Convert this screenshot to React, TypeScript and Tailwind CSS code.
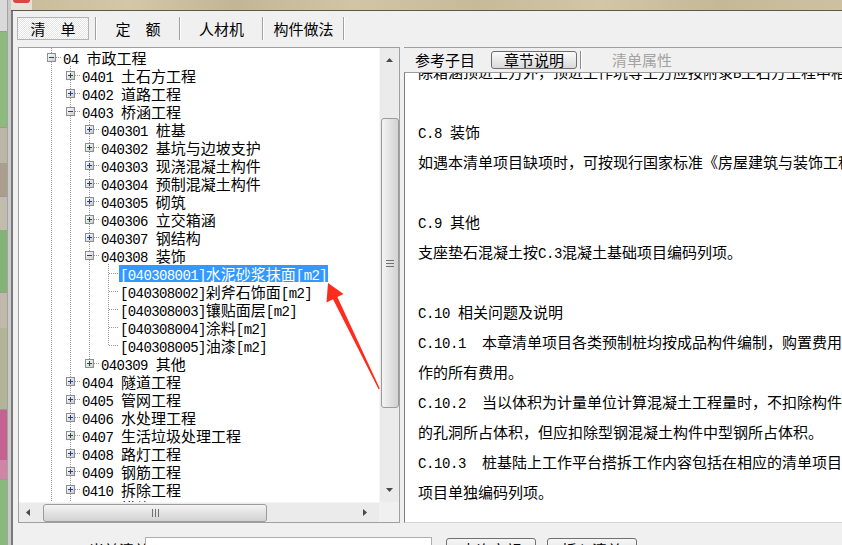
import React from "react";

const LAT = "font-['Liberation_Mono',monospace] text-[14px] tracking-[-0.6px]";
const LAT2 = "font-['Liberation_Mono',monospace] text-[14px] tracking-[-0.4px]";
const CJK = "font-['Noto_Sans_CJK_SC',sans-serif] text-[15px]";

function Mixed({ text, lat, cjk }: { text: string; lat: string; cjk: string }) {
  const parts = text.match(/[\x00-\x7f]+|[^\x00-\x7f]+/g) || [];
  return (
    <>
      {parts.map((p, i) =>
        /^[\x00-\x7f]/.test(p) ? (
          <span key={i} className={lat}>
            {p}
          </span>
        ) : (
          <span key={i} className={cjk}>
            {p}
          </span>
        )
      )}
    </>
  );
}

type Box = "plus" | "minus" | undefined;

function Cell({ anc, last, box, id }: { anc?: boolean; last?: boolean; box?: Box; id: string }) {
  const dot = "#9a9a9a";
  return (
    <svg width="19" height="18" className="block shrink-0">
      {anc ? (
        <line x1="8.5" y1="0" x2="8.5" y2="18" stroke={dot} strokeDasharray="1 1" />
      ) : (
        <>
          <defs>
            <linearGradient id={id} x1="0" y1="0" x2="1" y2="1">
              <stop offset="0" stopColor="#ffffff" />
              <stop offset="1" stopColor="#c9c9c9" />
            </linearGradient>
          </defs>
          <line x1="8.5" y1="0" x2="8.5" y2={last ? 9 : 18} stroke={dot} strokeDasharray="1 1" />
          <line x1="9" y1="9.5" x2="19" y2="9.5" stroke={dot} strokeDasharray="1 1" />
          {box && (
            <>
              <rect x="4.5" y="5.5" width="8" height="8" fill={`url(#${id})`} stroke="#8e8e8e" />
              <line x1="6" y1="9.5" x2="11" y2="9.5" stroke="#23408e" />
              {box === "plus" && <line x1="8.5" y1="7" x2="8.5" y2="12" stroke="#23408e" />}
            </>
          )}
        </>
      )}
    </svg>
  );
}

type Node = { d: number; t: string; box?: Box; last?: boolean; sel?: boolean };

const rows: Node[] = [
  { d: 0, t: "04 市政工程", box: "minus" },
  { d: 1, t: "0401 土石方工程", box: "plus" },
  { d: 1, t: "0402 道路工程", box: "plus" },
  { d: 1, t: "0403 桥涵工程", box: "minus" },
  { d: 2, t: "040301 桩基", box: "plus" },
  { d: 2, t: "040302 基坑与边坡支护", box: "plus" },
  { d: 2, t: "040303 现浇混凝土构件", box: "plus" },
  { d: 2, t: "040304 预制混凝土构件", box: "plus" },
  { d: 2, t: "040305 砌筑", box: "plus" },
  { d: 2, t: "040306 立交箱涵", box: "plus" },
  { d: 2, t: "040307 钢结构", box: "plus" },
  { d: 2, t: "040308 装饰", box: "minus" },
  { d: 3, t: "[040308001]水泥砂浆抹面[m2]", sel: true },
  { d: 3, t: "[040308002]剁斧石饰面[m2]" },
  { d: 3, t: "[040308003]镶贴面层[m2]" },
  { d: 3, t: "[040308004]涂料[m2]" },
  { d: 3, t: "[040308005]油漆[m2]", last: true },
  { d: 2, t: "040309 其他", box: "plus", last: true },
  { d: 1, t: "0404 隧道工程", box: "plus" },
  { d: 1, t: "0405 管网工程", box: "plus" },
  { d: 1, t: "0406 水处理工程", box: "plus" },
  { d: 1, t: "0407 生活垃圾处理工程", box: "plus" },
  { d: 1, t: "0408 路灯工程", box: "plus" },
  { d: 1, t: "0409 钢筋工程", box: "plus" },
  { d: 1, t: "0410 拆除工程", box: "plus" },
  { d: 1, t: "0411 措施项目", box: "plus" },
];

function TreeRow({ n, i }: { n: Node; i: number }) {
  return (
    <div className="flex h-[18px] items-center whitespace-nowrap">
      {Array.from({ length: n.d }).map((_, k) => (
        <Cell key={k} anc id={`a${i}-${k}`} />
      ))}
      <Cell last={n.last} box={n.box} id={`g${i}`} />
      <span
        className={
          n.sel
            ? "h-[17px] leading-[17px] px-[1px] bg-[#3399ff] text-white"
            : "h-[17px] leading-[17px] px-[1px] text-black"
        }
      >
        <Mixed text={n.t} lat={LAT} cjk={CJK} />
      </span>
    </div>
  );
}

function TriUp() {
  return (
    <svg width="7" height="4" className="block">
      <polygon points="3.5,0 7,4 0,4" fill="#4a4a4a" />
    </svg>
  );
}
function TriDown() {
  return (
    <svg width="7" height="4" className="block">
      <polygon points="0,0 7,0 3.5,4" fill="#4a4a4a" />
    </svg>
  );
}
function TriLeft() {
  return (
    <svg width="4" height="7" className="block">
      <polygon points="4,0 4,7 0,3.5" fill="#4a4a4a" />
    </svg>
  );
}
function TriRight() {
  return (
    <svg width="4" height="7" className="block">
      <polygon points="0,0 4,3.5 0,7" fill="#4a4a4a" />
    </svg>
  );
}

function VScroll() {
  return (
    <div className="w-[20px] h-full bg-[#ebebeb] border-l border-[#f6f6f6] flex flex-col items-center">
      <div className="h-[24px] w-full flex items-center justify-center">
        <TriUp />
      </div>
      <div className="h-[46px]" />
      <div className="h-[290px] w-[18px] rounded-[3px] border border-[#9b9b9b] bg-[linear-gradient(to_right,#f4f4f4,#e2e2e2_50%,#d2d2d2)] flex flex-col items-center justify-center gap-[2px]">
        <div className="w-[8px] h-px bg-[#707070]" />
        <div className="w-[8px] h-px bg-[#707070]" />
        <div className="w-[8px] h-px bg-[#707070]" />
      </div>
      <div className="flex-1" />
      <div className="h-[20px] w-full flex justify-center pt-[6px]">
        <TriDown />
      </div>
    </div>
  );
}

function HScroll() {
  return (
    <div className="flex-1 h-full bg-[#ebebeb] border-t border-[#f6f6f6] flex items-center">
      <div className="w-[17px] h-full flex items-center justify-center">
        <TriLeft />
      </div>
      <div className="w-[7px]" />
      <div className="w-[224px] h-[18px] rounded-[3px] border border-[#9b9b9b] bg-[linear-gradient(to_bottom,#f4f4f4,#e2e2e2_50%,#d2d2d2)] flex items-center justify-center gap-[2px]">
        <div className="h-[8px] w-px bg-[#707070]" />
        <div className="h-[8px] w-px bg-[#707070]" />
        <div className="h-[8px] w-px bg-[#707070]" />
      </div>
      <div className="flex-1" />
      <div className="w-[20px] h-full flex items-center justify-start pl-[4px]">
        <TriRight />
      </div>
    </div>
  );
}

function TreePanel() {
  return (
    <div className="ml-[5px] w-[382px] h-[476px] border border-[#a0a0a0] bg-white flex flex-col shrink-0">
      <div className="flex h-[454px]">
        <div className="flex-1 overflow-hidden pl-[24px]">
          {rows.map((n, i) => (
            <TreeRow key={i} n={n} i={i} />
          ))}
        </div>
        <VScroll />
      </div>
      <div className="flex h-[20px]">
        <HScroll />
        <div className="w-[20px] h-full bg-[#f0f0f0]" />
      </div>
    </div>
  );
}

const lines = [
  "除箱涵顶进土方外，顶进工作坑等土方应按附录B土石方工程中相关项目编码列项。",
  "",
  "C.8 装饰",
  "如遇本清单项目缺项时，可按现行国家标准《房屋建筑与装饰工程工程量计算规范》GB50854相应项目编码列项。",
  "",
  "C.9 其他",
  "支座垫石混凝土按C.3混凝土基础项目编码列项。",
  "",
  "C.10 相关问题及说明",
  "C.10.1  本章清单项目各类预制桩均按成品构件编制，购置费用应计入综合单价中，如采用现场预制，包括预制构件制",
  "作的所有费用。",
  "C.10.2  当以体积为计量单位计算混凝土工程量时，不扣除构件内钢筋、螺栓、预埋铁件、张拉孔道和单个面积",
  "的孔洞所占体积，但应扣除型钢混凝土构件中型钢所占体积。",
  "C.10.3  桩基陆上工作平台搭拆工作内容包括在相应的清单项目中，若为水上工作平台搭拆，应按本规范措施",
  "项目单独编码列项。",
];

function RightPanel() {
  return (
    <div className="ml-[4px] w-[460px] shrink-0 flex flex-col border-t border-[#a0a0a0]">
      <div className="h-[24px] flex items-center pl-[11px] whitespace-nowrap">
        <span className={`${CJK} leading-[18px] text-black`}>参考子目</span>
        <div className="ml-[16px] w-[86px] h-[18px] rounded-[3px] border border-[#6e6e6e] bg-[linear-gradient(to_bottom,#fbfbfb,#e9e9e9_50%,#dadada)] flex items-center justify-center">
          <span className={`${CJK} leading-[16px] text-black`}>章节说明</span>
        </div>
        <div className="ml-[3px] h-[18px] w-[2px] border-l border-[#8a8a8a] border-r border-r-white" />
        <span className={`ml-[30px] ${CJK} leading-[18px] text-[#a3a3a3]`}>清单属性</span>
      </div>
      <div className="h-[451px] border-t border-l border-b border-t-[#9c9c9c] border-l-[#7c7c7c] border-b-[#d4d4d4] bg-white overflow-hidden">
        <div className="mt-[-16px] pl-[13px]">
          {lines.map((l, i) => (
            <div key={i} className="h-[30px] leading-[30px] whitespace-pre overflow-hidden text-black">
              <Mixed text={l} lat={LAT2} cjk={CJK} />
            </div>
          ))}
        </div>
      </div>
    </div>
  );
}

function TabBar() {
  const sep = <div className="h-[23px] w-[2px] border-l border-[#a0a0a0] border-r border-r-white shrink-0" />;
  return (
    <div className="pt-[6px] pl-[4px] flex items-center whitespace-nowrap">
      <div className="w-[72px] h-[23px] border border-[#b4b4b4] bg-[repeating-conic-gradient(#e4e4e4_0%_25%,#ffffff_0%_50%)] bg-[length:2px_2px] flex items-center justify-center">
        <span className={`${CJK} leading-[20px] text-black`}>清　单</span>
      </div>
      <div className="w-[6px]" />
      {sep}
      <div className="w-[82px] flex justify-center">
        <span className={`${CJK} leading-[20px] text-black`}>定　额</span>
      </div>
      {sep}
      <div className="w-[81px] flex justify-center">
        <span className={`${CJK} leading-[20px] text-black`}>人材机</span>
      </div>
      {sep}
      <div className="w-[79px] flex justify-center">
        <span className={`${CJK} leading-[20px] text-black`}>构件做法</span>
      </div>
      {sep}
    </div>
  );
}

function BottomRow() {
  return (
    <div className="mt-[14px] flex items-start whitespace-nowrap">
      <div className="ml-[76px] w-[56px] pt-[1px]">
        <span className={`${CJK} leading-[18px] text-black`}>当前清单</span>
      </div>
      <div className="w-[287px] h-[22px] border border-[#abadb3] bg-white pl-[4px] pt-[2px] overflow-hidden">
        <Mixed text="[040308001]水泥砂浆抹面[m2]" lat={LAT} cjk={CJK} />
      </div>
      <div className="ml-[14px] mt-[1px] w-[90px] h-[22px] rounded-[3px] border border-[#707070] bg-[linear-gradient(to_bottom,#f6f6f6,#dddddd)] flex justify-center pt-[2px]">
        <span className={`${CJK} leading-[18px] text-black`}>查询定额</span>
      </div>
      <div className="ml-[11px] mt-[1px] w-[90px] h-[22px] rounded-[3px] border border-[#707070] bg-[linear-gradient(to_bottom,#f6f6f6,#dddddd)] flex justify-center pt-[2px]">
        <span className={`${CJK} leading-[18px] text-black`}>插入清单</span>
      </div>
    </div>
  );
}

function LeftStrip() {
  return (
    <div className="flex shrink-0 h-full">
      <div className="w-[7px] flex flex-col overflow-hidden">
        <div className="h-[32px] bg-[#d9d9d9] border-b border-[#9a9a9a]" />
        <div className="h-[96px] bg-[#8cbb7d] border-b border-[#9a9a9a]" />
        <div className="h-[35px] bg-[#bcb6a6]" />
        <div className="h-[34px] bg-[#a99f8c] border-b border-[#9a9a9a]" />
        <div className="h-[33px] bg-[#c2bcae]" />
        <div className="h-[63px] bg-[#84b376] border-b border-[#9a9a9a]" />
        <div className="h-[35px] bg-[#c0b9aa]" />
        <div className="h-[82px] bg-[#b3b497] border-b border-[#9a9a9a]" />
        <div className="h-[50px] bg-[#c4638f]" />
        <div className="h-[20px] bg-[#cf86a6] border-b border-[#9a9a9a]" />
        <div className="flex-1 bg-[#89b97b]" />
      </div>
      <div className="w-[4px] bg-[#cacaca] border-l border-[#a3a3a3]" />
    </div>
  );
}

function TopBar() {
  return (
    <div className="flex h-[11px] border-b border-[#5c584c] shrink-0">
      <div className="w-[21px] flex flex-col bg-[#e9e1d8]">
        <div className="h-[3px] bg-[#d9473d] rounded-b-[3px] mx-[2px]" />
      </div>
      <div className="flex-1 bg-[linear-gradient(to_right,#c9bd9c,#d3c7a8_12%,#c2b696_25%,#d1c5a6_40%,#c6ba99_55%,#d2c6a7_70%,#c4b897_85%,#cdc1a1)]" />
    </div>
  );
}

function Arrow() {
  return (
    <svg width="842" height="545" className="absolute left-0 top-0 pointer-events-none">
      <polygon
        points="328,283 343.5,294 337.4,297 379.8,388.6 378.6,389.2 333,299.2 326.5,302.5"
        fill="#ff2b1c"
      />
    </svg>
  );
}

export default function App() {
  return (
    <div className="relative w-[842px] h-[545px] overflow-hidden bg-[#f0f0f0] flex">
      <LeftStrip />
      <div className="flex flex-col w-[831px] shrink-0 h-full">
        <TopBar />
        <div className="flex-1 border-l-2 border-[#7a7a7a] bg-[#f0f0f0] flex flex-col">
          <TabBar />
          <div className="flex mt-[7px]">
            <TreePanel />
            <RightPanel />
          </div>
          <BottomRow />
        </div>
      </div>
      <Arrow />
    </div>
  );
}
